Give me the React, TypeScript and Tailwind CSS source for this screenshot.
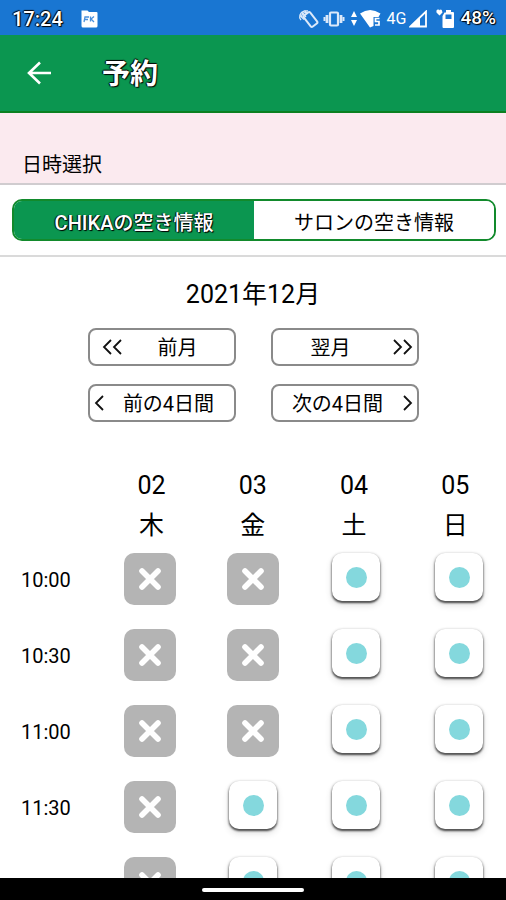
import { useState } from 'react';

const days = [
  { date: '02', weekday: '木' },
  { date: '03', weekday: '金' },
  { date: '04', weekday: '土' },
  { date: '05', weekday: '日' },
];

const slots = [
  { time: '10:00', open: [false, false, true, true] },
  { time: '10:30', open: [false, false, true, true] },
  { time: '11:00', open: [false, false, true, true] },
  { time: '11:30', open: [false, true, true, true] },
  { time: '', open: [false, true, true, true] },
];

const tabs = ['CHIKAの空き情報', 'サロンの空き情報'];

const StatusBar = () => (
  <div className="flex h-[35px] shrink-0 items-center bg-[#1976d2] pl-3 pr-[10px] pt-[2px] text-white">
    <span className="text-[20px] font-medium [text-shadow:1px_1px_1px_#000,-1px_0_1px_#000,0_-1px_1px_#000]">17:24</span>
    <svg className="ml-[17px]" width="18" height="18" viewBox="0 0 18 18">
      <path d="M1.5 0.5h6l1.5 1.5h7.5q1 0 1 1v13q0 1.500-1.500 1.500h-13q-1.500 0-1.500-1.500v-14q0-1.500 0-1.500z" fill="#fff" />
      <path d="M4 12l1-5h4M4.500 9.500h3.500M14 6.500l-3 2.500 3 3M10.500 6.500v5" fill="none" stroke="#4a90dc" strokeWidth="1.300" />
    </svg>

    <div className="ml-auto flex items-center">
      {/* nfc */}
      <svg width="21" height="20" viewBox="0 0 21 20" fill="none" stroke="#dbe9fa" strokeWidth="2">
        <rect x="8.500" y="3.500" width="8" height="14" rx="1.500" transform="rotate(-38 12.500 10.500)" />
        <path d="M3 11a5 5 0 0 1-1-5q2-5 8-4" strokeWidth="1.400" />
        <path d="M5 9.500a3 3 0 0 1 4-5M3.500 3l4.500 5M2 6.500l4 4M6.500 1.500l3 3" strokeWidth="1.300" />
      </svg>
      {/* vibrate */}
      <svg className="ml-1" width="22" height="18" viewBox="0 0 22 18" fill="none" stroke="#dbe9fa">
        <rect x="7" y="2.500" width="8" height="13" rx="1" strokeWidth="2.200" />
        <path d="M4 5v8M18 5v8" strokeWidth="2.800" />
        <path d="M1.500 7v4M20.500 7v4" strokeWidth="2" />
      </svg>
      {/* wifi */}
      <svg className="ml-[5px]" width="32" height="20" viewBox="0 0 32 20" fill="#fff">
        <path d="M1 8l3-6 3 6zM1 11h6l-3 6z" />
        <path d="M10 4.500q10-7 20.500 0l-2 3.500h-5v9l-3.500 1.500z" />
        <path d="M29.500 9.500h-4v3h3.500v3.500h-4" fill="none" stroke="#fff" strokeWidth="1.700" />
      </svg>
      <span className="ml-[5px] text-[16px] text-white">4G</span>
      <svg className="ml-[3px]" width="19" height="18" viewBox="0 0 19 18">
        <path d="M1.500 16.500L17 1.500v15z" fill="none" stroke="#fff" strokeWidth="1.800" />
        <path d="M1 17L11 7v10z" fill="#fff" />
      </svg>
      {/* battery */}
      <svg className="ml-2" width="20" height="20" viewBox="0 0 20 20" fill="#fff">
        <path d="M3.500 6.500L.5 3.500Q0 .5 2 .5t1.500 1q.500-1 1.500-1t1.500 3z" />
        <path d="M10 1h5v2h2q1 0 1 1v14q0 1-1 1h-9.500q-1 0-1-1v-11l2-3.500h1.500z" />
        <path d="M9.500 5.500h6v4.500h-6z" fill="#1976d2" />
      </svg>
      <span className="ml-1 text-[19px] font-medium [text-shadow:1px_1px_1px_#000,-1px_0_1px_#000,0_-1px_1px_#000]">48%</span>
    </div>
  </div>
);

const Chevrons = ({ count, flip }: { count: number; flip?: boolean }) => (
  <svg
    className={flip ? '-scale-x-100' : ''}
    width={count * 10}
    height="18"
    viewBox={`0 0 ${count * 10} 18`}
    fill="none"
    stroke="#111"
    strokeWidth="1.8"
  >
    <path d="M9 2L2 9l7 7" />
    {count > 1 && <path d="M19 2l-7 7 7 7" />}
  </svg>
);

const navButton =
  'flex h-[38px] w-[148px] items-center rounded-lg border-2 border-[#8a8a8a] text-[20px] leading-6';

function App() {
  const [activeTab, setActiveTab] = useState(0);
  const [selected, setSelected] = useState<string | null>(null);

  return (
    <div className="flex h-screen flex-col overflow-hidden bg-white font-['Roboto','Noto_Sans_CJK_JP',sans-serif] text-black">
      <StatusBar />

      <header className="flex h-[78px] shrink-0 items-center border-b-2 border-[#0b8020] bg-[#0b9650] pl-[26px] text-white">
        <button type="button" aria-label="戻る">
          <svg width="26" height="26" viewBox="0 0 26 26" fill="none" stroke="#fff" strokeWidth="2.600">
            <path d="M25 13H3M14 2.500L3 13l11 10.500" />
          </svg>
        </button>
        <h1 className="ml-[50px] pt-1 text-[28px] font-bold leading-9 [text-shadow:1px_1px_1px_#000,-1px_0_1px_#000,0_-1px_1px_#000]">予約</h1>
      </header>

      <div className="flex h-[72px] shrink-0 items-end border-b-2 border-[#d0cccf] bg-[#fbeaef] px-[22px] pb-[6px]">
        <h2 className="text-[20px] leading-6">日時選択</h2>
      </div>

      <div className="shrink-0 border-b-2 border-[#dadada] py-[14px] pl-3 pr-[10px]">
        <div className="flex h-[42px] overflow-hidden rounded-[10px] border-2 border-[#128a2c]" role="tablist">
          {tabs.map((tab, i) => (
            <button
              key={tab}
              type="button"
              role="tab"
              aria-selected={activeTab === i}
              onClick={() => setActiveTab(i)}
              className={`flex-1 pt-[6px] text-[20px] leading-6 ${
                activeTab === i
                  ? 'bg-[#0b9650] font-medium text-white [text-shadow:1px_1px_1px_#000,-1px_0_1px_#000]'
                  : 'bg-white'
              }`}
            >
              {tab}
            </button>
          ))}
        </div>
      </div>

      <main className="min-h-0 flex-1 overflow-y-auto [scrollbar-width:none]">
        <h3 className="pt-[22px] text-center text-[25px] leading-8">2021年12月</h3>

        <div className="mt-[17px] grid grid-cols-[auto_auto] justify-center gap-x-[35px] gap-y-[18px]">
          <button type="button" className={`${navButton} pl-3`}>
            <Chevrons count={2} />
            <span className="flex-1 pt-[2px] text-center">前月</span>
          </button>
          <button type="button" className={`${navButton} pr-1`}>
            <span className="flex-1 pr-1 pt-[2px] text-center">翌月</span>
            <Chevrons count={2} flip />
          </button>
          <button type="button" className={`${navButton} pl-1`}>
            <Chevrons count={1} />
            <span className="flex-1 pt-[2px] text-center">前の4日間</span>
          </button>
          <button type="button" className={`${navButton} pr-1`}>
            <span className="flex-1 pt-[2px] text-center">次の4日間</span>
            <Chevrons count={1} flip />
          </button>
        </div>

        <table className="mt-12 block w-full">
          <thead className="block">
            <tr className="flex">
              <td className="w-[101px]" />
              {days.map((day) => (
                <th key={day.date} scope="col" className="flex-1 text-[25px] font-normal leading-8">
                  <span className="block">{day.date}</span>
                  <span className="mt-2 block">{day.weekday}</span>
                </th>
              ))}
            </tr>
          </thead>
          <tbody className="block pt-[11px]">
            {slots.map((slot) => (
              <tr key={slot.time} className="flex h-[76px]">
                <th scope="row" className="w-[94px] pl-[21px] pt-[15px] text-left text-[20px] font-normal leading-6">
                  {slot.time}
                </th>
                {slot.open.map((open, i) => {
                  const id = `${days[i].date} ${slot.time}`;
                  return (
                    <td key={id} className="flex-1 pl-[30px]">
                      {open ? (
                        <button
                          type="button"
                          aria-label={id}
                          aria-pressed={selected === id}
                          onClick={() => setSelected(id)}
                          className="mx-[2px] flex size-12 items-center justify-center rounded-[10px] bg-white shadow-[0_2px_2px_#555,0_1px_3px_#888,0_4px_7px_#ddd]"
                        >
                          <span className="size-[21px] rounded-full bg-[#84d8dd]" />
                        </button>
                      ) : (
                        <button
                          type="button"
                          aria-label={id}
                          disabled
                          className="flex size-[52px] items-center justify-center rounded-[10px] bg-[#b4b4b4]"
                        >
                          <svg width="22" height="22" viewBox="0 0 22 22" stroke="#fff" strokeWidth="5.600" strokeLinecap="round">
                            <path d="M3 3l16 16M19 3L3 19" />
                          </svg>
                        </button>
                      )}
                    </td>
                  );
                })}
              </tr>
            ))}
          </tbody>
        </table>
      </main>

      <footer className="flex h-[22px] shrink-0 items-center justify-center bg-black pt-[2px]">
        <span className="h-1 w-[102px] rounded-full bg-white" />
      </footer>
    </div>
  );
}

export default App;
